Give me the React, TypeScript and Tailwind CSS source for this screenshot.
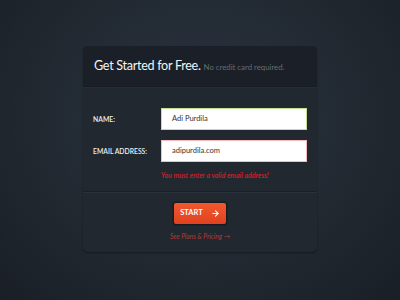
import { ArrowRight } from "lucide-react";

export default function App() {
  return (
    <div className="flex h-[300px] w-[400px] items-start justify-center bg-[radial-gradient(ellipse_at_50%_40%,#2b3642_0%,#232b34_45%,#1a1f26_100%)] pt-[46px] font-['Lato',sans-serif]">
      <div className="w-[234px] overflow-hidden rounded-[5px] bg-[#212830] shadow-[0_1px_2px_rgba(0,0,0,0.35)]">
        <div className="flex h-[41px] items-center gap-[3px] border-b border-[#181d23] bg-[#1b2028] pl-[11px] pt-[1px]">
          <span className="text-[12.6px] leading-none tracking-[-0.3px] text-[#f1f3f5]">Get Started for Free.</span>
          <span className="pt-[2px] text-[7.8px] leading-none text-[#636b74]">No credit card required.</span>
        </div>
        <div className="border-t border-[#262e37] px-[10px] pt-[20px] pb-[10px]">
          <div className="flex items-center">
            <span className="w-[68px] text-[6.8px] font-semibold text-[#eef0f2]">NAME:</span>
            <div className="flex h-[22px] w-[146px] items-center border-[1.5px] border-[#c6df8e] bg-white pl-[10px] text-[7.5px] text-[#333]">
              Adi Purdila
            </div>
          </div>
          <div className="mt-[10px] flex items-center">
            <span className="w-[68px] text-[6.8px] font-semibold text-[#eef0f2]">EMAIL ADDRESS:</span>
            <div className="flex h-[22px] w-[146px] items-center border-[1.5px] border-[#f7b9b9] bg-white pl-[10px] text-[7.5px] text-[#333]">
              adipurdila.com
            </div>
          </div>
          <div className="mt-[8px] pl-[68px] text-[7px] font-semibold italic text-[#d4202a]">
            You must enter a valid email address!
          </div>
        </div>
        <div className="flex flex-col items-center border-t border-[#1a1f25] pt-[11px] pb-[11px] shadow-[inset_0_1px_0_#29313a]">
          <button
            type="button"
            className="flex h-[21px] w-[52px] items-center justify-center gap-[8px] rounded-[2px] bg-gradient-to-b from-[#f2582e] to-[#e04220] text-[7.5px] font-bold text-white shadow-[0_0_0_1.5px_#181c22]"
          >
            START
            <ArrowRight size={9} strokeWidth={3} />
          </button>
          <div className="mt-[8px] text-[6.6px] italic text-[#b13c35]">See Plans &amp; Pricing →</div>
        </div>
      </div>
    </div>
  );
}
